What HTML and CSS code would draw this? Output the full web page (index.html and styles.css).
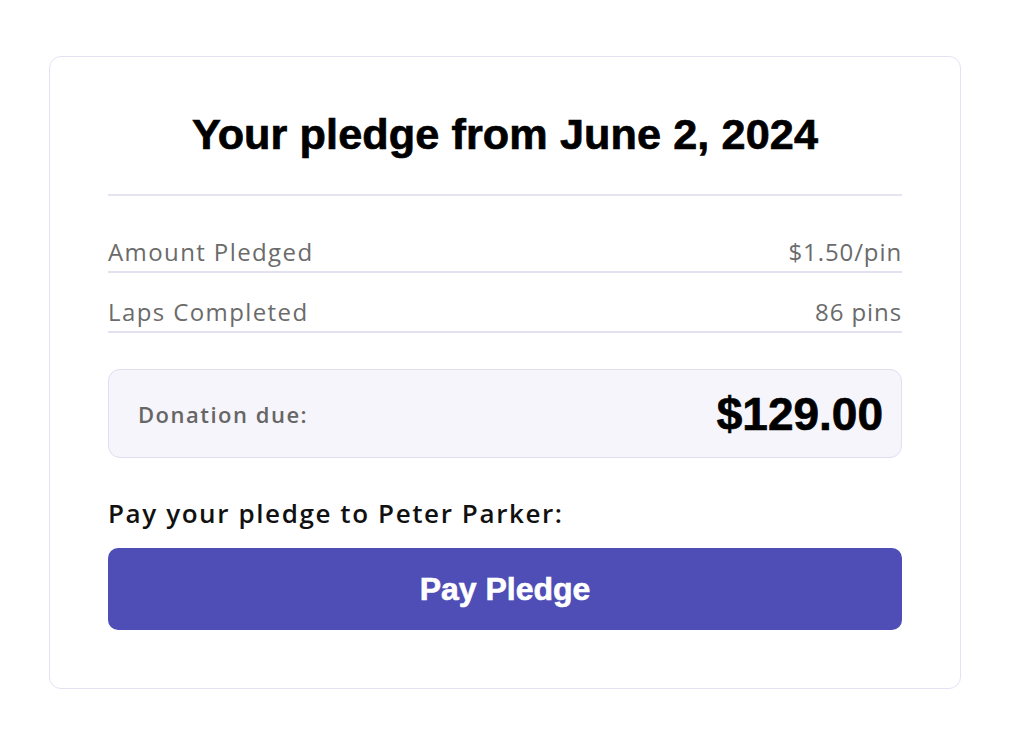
FILE: index.html
```html
<!DOCTYPE html>
<html lang="en">
<head>
<meta charset="utf-8">
<title>Your pledge</title>
<link rel="stylesheet" href="styles.css">
</head>
<body>
<main class="card">
  <h1 class="title">Your pledge from June 2, 2024</h1>
  <hr class="divider">
  <div class="rows">
    <div class="row"><span>Amount Pledged</span><span>$1.50/pin</span></div>
    <div class="row"><span>Laps Completed</span><span>86 pins</span></div>
  </div>
  <div class="due">
    <span class="due-label">Donation due:</span>
    <span class="due-amount">$129.00</span>
  </div>
  <p class="pay-to">Pay your pledge to Peter Parker:</p>
  <button class="pay-btn" type="button">Pay Pledge</button>
</main>
</body>
</html>
```

FILE: styles.css
```css
* { box-sizing: border-box; }

html, body { background: #ffffff; }

body {
  margin: 0;
  padding: 56px 0 0 49px;
}

.card {
  width: 912px;
  height: 633px;
  border: 1px solid #e4e2f1;
  border-radius: 12px;
  padding: 52px 58px 58px;
  display: flex;
  flex-direction: column;
}

.title {
  margin: 0;
  font-family: "Liberation Sans", Arial, sans-serif;
  font-weight: 700;
  font-size: 43.2px;
  line-height: 50px;
  letter-spacing: 0.1px;
  -webkit-text-stroke: 0.7px #000;
  text-align: center;
  color: #000;
}

.divider {
  margin: 35px 0 0;
  border: 0;
  border-top: 2px solid #e6e4f1;
  height: 0;
}

.rows {
  margin-top: 42px;
  display: flex;
  flex-direction: column;
  gap: 25px;
}

.row {
  display: flex;
  justify-content: space-between;
  font-family: "Open Sans", Lato, sans-serif;
  font-size: 24px;
  line-height: 28px;
  letter-spacing: 1.4px;
  color: #6b6b6b;
  padding-bottom: 5px;
  border-bottom: 2px solid #e3e1f0;
}

.row span:last-child { letter-spacing: 0.9px; }

.due {
  margin-top: 36px;
  height: 89px;
  background: #f6f5fb;
  border: 1px solid #e0def0;
  border-radius: 12px;
  display: flex;
  align-items: center;
  justify-content: space-between;
  padding: 0 18px 0 29px;
}

.due-label {
  font-family: "Open Sans", Lato, sans-serif;
  font-weight: 600;
  font-size: 22px;
  letter-spacing: 1.5px;
  color: #666666;
}

.due-amount {
  font-family: "Liberation Sans", Arial, sans-serif;
  font-weight: 700;
  font-size: 46px;
  letter-spacing: 0;
  -webkit-text-stroke: 0.7px #000;
  color: #000;
}

.pay-to {
  margin: 40px 0 0;
  font-family: "Open Sans", Lato, sans-serif;
  font-weight: 600;
  font-size: 26px;
  line-height: 30px;
  letter-spacing: 1.6px;
  color: #111;
}

.pay-btn {
  margin-top: 20px;
  height: 82px;
  width: 100%;
  border: 0;
  border-radius: 10px;
  background: #4f4db6;
  color: #fff;
  font-family: "Liberation Sans", Arial, sans-serif;
  font-weight: 700;
  font-size: 32px;
  letter-spacing: 0;
  -webkit-text-stroke: 0.6px #fff;
  cursor: pointer;
}
```
